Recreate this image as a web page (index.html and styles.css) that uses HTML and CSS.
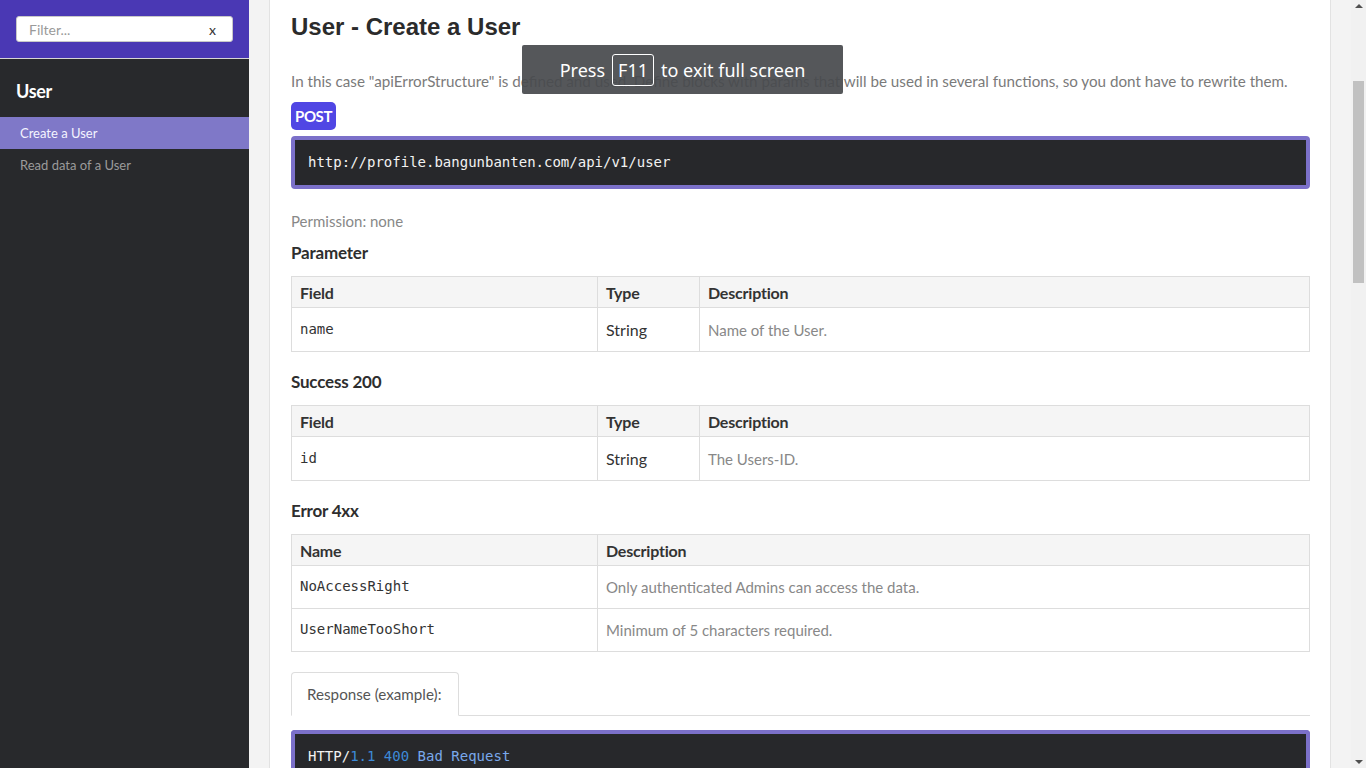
FILE: index.html
```html
<!DOCTYPE html>
<html lang="en">
<head>
<meta charset="utf-8">
<title>apiDoc</title>
<link rel="stylesheet" href="styles.css">
</head>
<body>
<div class="app">
  <nav class="sidebar">
    <div class="search">
      <div class="filter"><span class="ph">Filter...</span><span class="clear">x</span></div>
    </div>
    <div class="nav-h">User</div>
    <a class="nav-item active">Create a User</a>
    <a class="nav-item">Read data of a User</a>
  </nav>
  <div class="gutter-l"></div>
  <main class="content">
    <h1 class="title">User - Create a User</h1>
    <p class="desc">In this case "apiErrorStructure" is defined and used. Define blocks with params that will be used in several functions, so you dont have to rewrite them.</p>
    <span class="badge">POST</span>
    <pre class="code"><code>http://profile.bangunbanten.com/api/v1/user</code></pre>
    <p class="perm">Permission: none</p>

    <h4 class="sec">Parameter</h4>
    <table class="tbl">
      <colgroup><col class="c1"><col class="c2"><col></colgroup>
      <thead><tr><th>Field</th><th>Type</th><th>Description</th></tr></thead>
      <tbody><tr><td class="mono">name</td><td class="type">String</td><td class="d">Name of the User.</td></tr></tbody>
    </table>

    <h4 class="sec">Success 200</h4>
    <table class="tbl">
      <colgroup><col class="c1"><col class="c2"><col></colgroup>
      <thead><tr><th>Field</th><th>Type</th><th>Description</th></tr></thead>
      <tbody><tr><td class="mono">id</td><td class="type">String</td><td class="d">The Users-ID.</td></tr></tbody>
    </table>

    <h4 class="sec sec-err">Error 4xx</h4>
    <table class="tbl tbl-err">
      <colgroup><col class="c1"><col></colgroup>
      <thead><tr><th>Name</th><th>Description</th></tr></thead>
      <tbody>
        <tr><td class="mono">NoAccessRight</td><td class="d">Only authenticated Admins can access the data.</td></tr>
        <tr><td class="mono">UserNameTooShort</td><td class="d">Minimum of 5 characters required.</td></tr>
      </tbody>
    </table>

    <div class="tabs"><div class="tab">Response (example):</div></div>
    <pre class="code code2"><code><span class="w">HTTP/</span><span class="n">1.1 400</span> <span class="s">Bad Request</span></code></pre>
  </main>
  <div class="gutter-r"></div>
  <div class="scrollbar">
    <span class="arrow up"></span>
    <div class="thumb"></div>
    <span class="arrow down"></span>
  </div>
</div>
<div class="fs-toast">Press <span class="key">F11</span> to exit full screen</div>
</body>
</html>
```

FILE: styles.css
```css
* { box-sizing: border-box; }
html, body { margin: 0; padding: 0; height: 100%; overflow: hidden; }
body {
  font-family: Lato, "Noto Sans", sans-serif;
  font-size: 15px;
  color: #333;
  background: #fff;
}
.app { display: flex; height: 768px; }

/* sidebar */
.sidebar { width: 249px; flex: none; background: #28292c; display: flex; flex-direction: column; }
.search { height: 59px; background: #4a38b4; border-bottom: 1px solid #d6d6d6; padding: 16px 16px 0 16px; }
.filter {
  width: 217px; height: 26px; background: #fff; border: 1px solid #c8c8c8; border-radius: 3px;
  display: flex; align-items: center; justify-content: space-between; padding: 0 16px 0 12px;
  font-size: 14px;
}
.ph { color: #9a9a9a; }
.clear { color: #333; font-size: 14px; }
.nav-h { color: #fff; font-weight: 700; font-size: 18px; line-height: 24px; padding: 20px 16px 0 16px; height: 58px; letter-spacing: -0.3px; }
.nav-item { display: block; height: 32px; line-height: 32px; padding-left: 20px; font-size: 13px; color: #9b9b9b; }
.nav-item.active { background: #7f78c8; color: #f4f4ff; }

.gutter-l { width: 21px; flex: none; background: #f3f3f3; border-right: 1px solid #e2e2e2; }
.gutter-r { width: 21px; flex: none; background: #f3f3f3; border-left: 1px solid #e2e2e2; }

/* content */
.content { flex: 1; padding: 12px 20px 0 21px; overflow: hidden; }
.title { font-family: "Liberation Sans", Arial, sans-serif; font-size: 24px; font-weight: 700; line-height: 30px; margin: 0; color: #2b2b2b; }
.desc { margin: 28px 0 0 0; line-height: 22px; color: #7a7a7a; white-space: nowrap; font-size: 15.2px; }
.badge {
  display: inline-block; margin-top: 10px; height: 28px; line-height: 28px; padding: 0 4px;
  background: #5046e4; color: #fff; font-weight: 700; font-size: 15px; border-radius: 5px; letter-spacing: -0.4px;
}
.code {
  margin: 6px 0 0 0; background: #27282b; border: 4px solid #7b70c9; border-radius: 4px;
  padding: 14px 13px; font-family: "DejaVu Sans Mono", monospace; font-size: 14px; line-height: 17px; color: #f2f2f2;
}
.perm { margin: 21px 0 0 0; line-height: 22px; color: #888; }
.sec { margin: 10px 0 0 0; font-size: 17px; line-height: 22px; font-weight: 700; color: #2e2e2e; letter-spacing: -0.2px; }
.tbl + .sec { margin-top: 19px; }
.tbl { width: 100%; border-collapse: collapse; margin-top: 12px; table-layout: fixed; }
.tbl-err { margin-top: 12px; }
.c1 { width: 306px; }
.c2 { width: 102px; }
.tbl th, .tbl td { border: 1px solid #dddddd; text-align: left; padding: 0 8px; }
.tbl th { background: #f5f5f5; height: 31px; font-size: 16px; font-weight: 700; color: #333; letter-spacing: -0.2px; }
.tbl td { height: 44px; font-size: 15px; }
.tbl-err td { height: 43px; }
.tbl td.mono { font-family: "DejaVu Sans Mono", monospace; font-size: 14px; color: #333; padding-bottom: 2px; }
.tbl td.type { font-size: 16px; color: #333; }
.tbl td.d { color: #888; }

.tabs { margin-top: 20px; border-bottom: 1px solid #dddddd; height: 44px; }
.tab {
  display: inline-block; height: 44px; padding: 0 17px 0 15px; line-height: 43px; color: #555; font-size: 15.2px;
  border: 1px solid #dddddd; border-bottom-color: #fff; border-radius: 4px 4px 0 0; background: #fff;
}
.code2 { margin-top: 14px; border-bottom: none; border-radius: 4px 4px 0 0; }
.code2 .w { color: #f2f2f2; }
.code2 .n { color: #3d8ad8; }
.code2 .s { color: #7aa8ec; }

/* scrollbar */
.scrollbar { width: 15px; flex: none; background: #f1f1f1; position: relative; }
.thumb { position: absolute; left: 2px; right: 2px; top: 81px; height: 202px; background: #c1c1c1; }
.arrow { position: absolute; left: 4px; width: 0; height: 0; border-left: 4px solid transparent; border-right: 4px solid transparent; }
.arrow.up { top: 4px; border-bottom: 4px solid #505050; }
.arrow.down { bottom: 4px; border-top: 4px solid #505050; }

/* fullscreen toast */
.fs-toast {
  position: absolute; left: 522px; top: 45px; width: 321px; height: 49px;
  background: rgba(72, 74, 78, 0.93); color: #fff; border-radius: 2px;
  font-family: "Noto Sans", "Open Sans", sans-serif; font-size: 18px;
  display: flex; align-items: center; justify-content: center; gap: 0;
}
.key { display: inline-block; border: 1px solid #fff; border-radius: 3px; padding: 0 5px; line-height: 30px; margin: 0 7px; }
```
